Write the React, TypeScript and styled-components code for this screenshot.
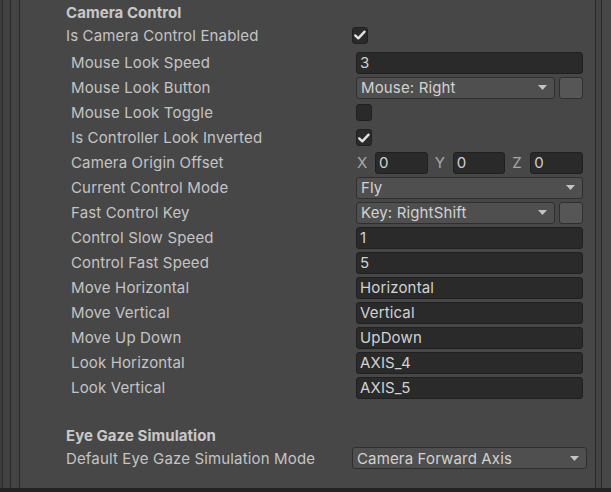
import React from "react";
import styled, { createGlobalStyle } from "styled-components";

const Global = createGlobalStyle`
  html, body { margin: 0; padding: 0; background: #474747; }
  * { box-sizing: border-box; }
`;

const Frame = styled.div`
  width: 611px;
  height: 492px;
  display: flex;
  flex-direction: column;
  background: #474747;
  font-family: Inter, "Noto Sans", sans-serif;
  font-size: 15px;
  letter-spacing: 0.15px;
  color: #c4c4c4;
  overflow: hidden;
`;

const Body = styled.div`
  flex: 1;
  display: flex;
  min-height: 0;
`;

const Gutter = styled.div`
  display: flex;
  flex-shrink: 0;
`;

const Stripe = styled.div<{ $w: number; $bg: string; $side: "left" | "right" }>`
  width: ${(p) => p.$w}px;
  background: ${(p) => p.$bg};
  ${(p) => (p.$side === "left" ? "border-right" : "border-left")}: 1px solid #2a2a2a;
  box-sizing: content-box;
`;

const Content = styled.div`
  flex: 1;
  display: flex;
  flex-direction: column;
  padding-top: 1px;
`;

const BottomBar = styled.div`
  height: 4px;
  background: #232323;
  flex-shrink: 0;
`;

const Header = styled.div<{ $mt?: number }>`
  height: 23px;
  display: flex;
  align-items: center;
  padding-left: 46px;
  margin-top: ${(p) => p.$mt ?? 0}px;
  font-weight: 700;
  letter-spacing: 0.05px;
  color: #c8c8c8;
`;

const TopRow = styled.div`
  height: 22px;
  display: flex;
  align-items: center;
  padding: 0 8px 0 46px;
`;

const Group = styled.div`
  margin-top: 4px;
  padding: 0 12px 0 51px;
  display: flex;
  flex-direction: column;
`;

const GroupRow = styled.div`
  height: 25px;
  display: flex;
  align-items: center;
`;

const Label = styled.div<{ $w: number }>`
  width: ${(p) => p.$w}px;
  flex-shrink: 0;
  white-space: nowrap;
  color: #c4c4c4;
`;

const Value = styled.div`
  flex: 1;
  min-width: 0;
  display: flex;
  align-items: center;
  gap: 4px;
`;

const TextField = styled.div`
  flex: 1;
  height: 22px;
  display: flex;
  align-items: center;
  padding: 0 3px;
  background: #2a2a2a;
  border: 1px solid #202020;
  border-radius: 3px;
  color: #d2d2d2;
  white-space: nowrap;
  overflow: hidden;
`;

const Dropdown = styled.div`
  flex: 1;
  height: 22px;
  display: flex;
  align-items: center;
  justify-content: space-between;
  padding: 0 7px 0 4px;
  background: #4f4f4f;
  border: 1px solid #2f2f2f;
  border-radius: 3px;
  color: #d2d2d2;
  white-space: nowrap;
`;

const SquareButton = styled.div`
  width: 24px;
  height: 22px;
  flex-shrink: 0;
  background: #565656;
  border: 1px solid #2f2f2f;
  border-radius: 3px;
`;

const CheckBox = styled.div`
  width: 16px;
  height: 17px;
  background: #2a2a2a;
  border: 1px solid #202020;
  border-radius: 3px;
  display: flex;
  align-items: center;
  justify-content: center;
`;

const VectorGrid = styled.div`
  flex: 1;
  display: grid;
  grid-template-columns: repeat(3, 1fr);
  gap: 6px;
`;

const Axis = styled.div`
  display: flex;
  align-items: center;
`;

const AxisLabel = styled.span`
  width: 19px;
  flex-shrink: 0;
  padding-left: 1px;
  color: #a8a8a8;
`;

const Arrow = () => (
  <svg width="9" height="5" viewBox="0 0 9 5">
    <polygon points="0,0 9,0 4.5,5" fill="#c4c4c4" />
  </svg>
);

const Check = ({ on }: { on: boolean }) => (
  <CheckBox>
    {on && (
      <svg width="14" height="14" viewBox="0 0 14 14">
        <path
          d="M2.2 7.4 L5.3 10.4 L11.6 3.6"
          fill="none"
          stroke="#e4e4e4"
          strokeWidth="2.3"
          strokeLinecap="round"
          strokeLinejoin="round"
        />
      </svg>
    )}
  </CheckBox>
);

type Field =
  | { kind: "text"; value: string }
  | { kind: "drop"; value: string; button?: boolean }
  | { kind: "check"; on: boolean }
  | { kind: "vec" };

const renderField = (f: Field) => {
  switch (f.kind) {
    case "text":
      return <TextField>{f.value}</TextField>;
    case "drop":
      return (
        <>
          <Dropdown>
            <span>{f.value}</span>
            <Arrow />
          </Dropdown>
          {f.button && <SquareButton />}
        </>
      );
    case "check":
      return <Check on={f.on} />;
    case "vec":
      return (
        <VectorGrid>
          {["X", "Y", "Z"].map((a) => (
            <Axis key={a}>
              <AxisLabel>{a}</AxisLabel>
              <TextField>0</TextField>
            </Axis>
          ))}
        </VectorGrid>
      );
  }
};

const rows: { label: string; field: Field }[] = [
  { label: "Mouse Look Speed", field: { kind: "text", value: "3" } },
  { label: "Mouse Look Button", field: { kind: "drop", value: "Mouse: Right", button: true } },
  { label: "Mouse Look Toggle", field: { kind: "check", on: false } },
  { label: "Is Controller Look Inverted", field: { kind: "check", on: true } },
  { label: "Camera Origin Offset", field: { kind: "vec" } },
  { label: "Current Control Mode", field: { kind: "drop", value: "Fly" } },
  { label: "Fast Control Key", field: { kind: "drop", value: "Key: RightShift", button: true } },
  { label: "Control Slow Speed", field: { kind: "text", value: "1" } },
  { label: "Control Fast Speed", field: { kind: "text", value: "5" } },
  { label: "Move Horizontal", field: { kind: "text", value: "Horizontal" } },
  { label: "Move Vertical", field: { kind: "text", value: "Vertical" } },
  { label: "Move Up Down", field: { kind: "text", value: "UpDown" } },
  { label: "Look Horizontal", field: { kind: "text", value: "AXIS_4" } },
  { label: "Look Vertical", field: { kind: "text", value: "AXIS_5" } },
];

export default function App() {
  return (
    <>
      <Global />
      <Frame>
        <Body>
          <Gutter>
            <Stripe $side="left" $w={2} $bg="#3d3d3d" />
            <Stripe $side="left" $w={7} $bg="#414141" />
            <Stripe $side="left" $w={8} $bg="#444444" />
          </Gutter>
          <Content>
            <Header>Camera Control</Header>
            <TopRow>
              <Label $w={286}>Is Camera Control Enabled</Label>
              <Value>
                <Check on={true} />
              </Value>
            </TopRow>
            <Group>
              {rows.map((r) => (
                <GroupRow key={r.label}>
                  <Label $w={285}>{r.label}</Label>
                  <Value>{renderField(r.field)}</Value>
                </GroupRow>
              ))}
            </Group>
            <Header $mt={24}>Eye Gaze Simulation</Header>
            <TopRow>
              <Label $w={286}>Default Eye Gaze Simulation Mode</Label>
              <Value>
                <Dropdown>
                  <span>Camera Forward Axis</span>
                  <Arrow />
                </Dropdown>
              </Value>
            </TopRow>
          </Content>
          <Gutter>
            <Stripe $side="right" $w={5} $bg="#444444" />
            <Stripe $side="right" $w={9} $bg="#474747" />
          </Gutter>
        </Body>
        <BottomBar />
      </Frame>
    </>
  );
}
